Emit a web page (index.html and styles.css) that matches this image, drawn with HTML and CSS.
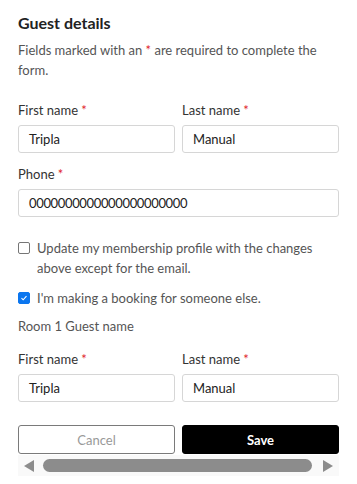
FILE: index.html
```html
<!DOCTYPE html>
<html>
<head>
    <title>Guest details</title>
    <link rel="stylesheet" href="styles.css">
</head>
<body>
    <div class="panel">
        <h2 class="title">Guest details</h2>
        <p class="note">Fields marked with an <span class="req">*</span> are required to complete the form.</p>

        <div class="row">
            <div class="field">
                <label>First name <span class="req">*</span></label>
                <div class="input">Tripla</div>
            </div>
            <div class="field">
                <label>Last name <span class="req">*</span></label>
                <div class="input">Manual</div>
            </div>
        </div>

        <div class="field phone">
            <label>Phone <span class="req">*</span></label>
            <div class="input digits">0000000000000000000000</div>
        </div>

        <div class="check first-check">
            <span class="box"></span>
            <span>Update my membership profile with the changes above except for the email.</span>
        </div>
        <div class="check">
            <span class="box checked">
                <svg width="12" height="12" viewBox="0 0 12 12"><path d="M3 6.2 L5 8.2 L9 3.8" fill="none" stroke="#fff" stroke-width="1.3"/></svg>
            </span>
            <span>I'm making a booking for someone else.</span>
        </div>

        <div class="room">Room 1 Guest name</div>

        <div class="row">
            <div class="field">
                <label>First name <span class="req">*</span></label>
                <div class="input">Tripla</div>
            </div>
            <div class="field">
                <label>Last name <span class="req">*</span></label>
                <div class="input">Manual</div>
            </div>
        </div>

        <div class="actions">
            <button class="btn cancel">Cancel</button>
            <button class="btn save">Save</button>
        </div>

        <div class="scrollbar">
            <span class="arrow left"></span>
            <span class="thumb"></span>
            <span class="arrow right"></span>
        </div>
    </div>
</body>
</html>
```

FILE: styles.css
```css
body {
    margin: 0;
    background: #fff;
    font-family: Lato, "Open Sans", sans-serif;
    color: #333;
}

.panel {
    padding: 14px 18px 0 18px;
}

.title {
    margin: 0;
    font-size: 16px;
    font-weight: 700;
    color: #222;
    line-height: 18px;
}

.note {
    margin: 8px 0 0 0;
    font-size: 13px;
    line-height: 20px;
    color: #555;
}

.req {
    color: #e0242b;
}

.row {
    display: flex;
    gap: 7px;
    margin-top: 22px;
}

.field {
    flex: 1;
    display: flex;
    flex-direction: column;
}

.field label {
    font-size: 13px;
    line-height: 16px;
    color: #333;
    margin-bottom: 7px;
}

.input {
    height: 26px;
    border: 1px solid #d6d6d6;
    border-radius: 3px;
    padding: 0 10px;
    font-size: 13px;
    line-height: 26px;
    color: #222;
}

.digits {
    letter-spacing: -0.35px;
}

.phone {
    margin-top: 13px;
}

.check {
    display: flex;
    align-items: flex-start;
    gap: 7px;
    font-size: 13px;
    line-height: 20px;
    color: #555;
    margin-top: 10px;
}

.first-check {
    margin-top: 21px;
}

.box {
    flex: none;
    width: 10px;
    height: 10px;
    border: 1px solid #767676;
    border-radius: 2px;
    margin-top: 4px;
    display: flex;
    align-items: center;
    justify-content: center;
}

.box.checked {
    background: #0b76ef;
    border-color: #0b76ef;
}

.room {
    font-size: 13px;
    line-height: 20px;
    color: #555;
    margin-top: 8px;
}

.room + .row {
    margin-top: 15px;
}

.actions {
    display: flex;
    gap: 7px;
    margin-top: 23px;
}

.btn {
    flex: 1;
    height: 29px;
    border-radius: 3px;
    font-family: Lato, "Open Sans", sans-serif;
    font-size: 13px;
}

.cancel {
    background: #fff;
    border: 1px solid #7a7a7a;
    color: #999;
}

.save {
    background: #000;
    border: 1px solid #000;
    color: #fff;
    font-weight: 700;
}

.scrollbar {
    display: flex;
    align-items: center;
    height: 21px;
    margin-top: 1px;
    background: #f9f9f9;
    padding: 0 6px;
    gap: 9px;
}

.thumb {
    flex: 1;
    height: 13px;
    border-radius: 7px;
    background: #8c8c8c;
}

.arrow {
    width: 0;
    height: 0;
    border-top: 6px solid transparent;
    border-bottom: 6px solid transparent;
}

.arrow.left {
    border-right: 10px solid #8c8c8c;
}

.arrow.right {
    border-left: 10px solid #8c8c8c;
    margin-left: 2px;
}
```
